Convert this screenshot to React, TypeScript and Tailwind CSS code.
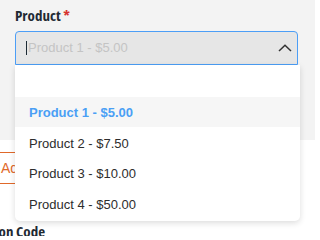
const products = [
  { label: 'Product 1 - $5.00', active: true },
  { label: 'Product 2 - $7.50' },
  { label: 'Product 3 - $10.00' },
  { label: 'Product 4 - $50.00' },
]

export default function App() {
  return (
    <div className="relative w-[315px] h-[236px] overflow-hidden bg-white font-['Liberation_Sans',Arial,sans-serif]">
      <div className="h-[140px] bg-[#f3f3f3] pl-[15px] pr-[17px] pt-[5px]">
        <label className="block h-[26px] font-['Open_Sans',sans-serif] [font-stretch:75%] font-bold text-[15px] leading-[20px] text-[#1f2a33]">
          Product <span className="text-[#d6332f]">*</span>
        </label>
        <div className="relative">
          <div className="flex h-[34px] items-center rounded-t-[4px] border border-[#4c9ef6] bg-[#e6e6e6] pl-[10px] pr-[5px]">
            <span className="mr-px h-[14px] w-px bg-[#1d2a33]" />
            <span className="flex-1 text-[13px] text-[#c4c4c4]">Product 1 - $5.00</span>
            <svg width="14" height="8" viewBox="0 0 14 8" fill="none" stroke="#333" strokeWidth="1.5">
              <path d="M1 7 L7 1.2 L13 7" />
            </svg>
          </div>
          <div className="absolute left-0 top-full z-10 w-[285px] rounded-b-[5px] bg-white pb-[2px] shadow-[0_2px_6px_rgba(0,0,0,0.14)]">
            <div className="h-[32px]" />
            {products.map((p) => (
              <div
                key={p.label}
                className={
                  p.active
                    ? 'flex h-[30px] items-center bg-[#f6f6f6] px-[14px] pt-px text-[13px] font-bold text-[#4a9ff5]'
                    : 'flex h-[30.5px] items-center px-[14px] pt-[2px] text-[13px] text-[#2d2d2d]'
                }
              >
                {p.label}
              </div>
            ))}
          </div>
        </div>
      </div>
      <div className="pt-[12px]">
        <button className="flex h-[32px] w-[200px] items-center border-y border-[#e0692a] pl-px text-[14px] text-[#e0692a]">
          Add Product
        </button>
      </div>
      <div className="mt-[37px] -ml-[31px] font-['Open_Sans',sans-serif] [font-stretch:75%] font-bold text-[15px] leading-[20px] text-[#1f2a33]">
        Coupon Code
      </div>
    </div>
  )
}
